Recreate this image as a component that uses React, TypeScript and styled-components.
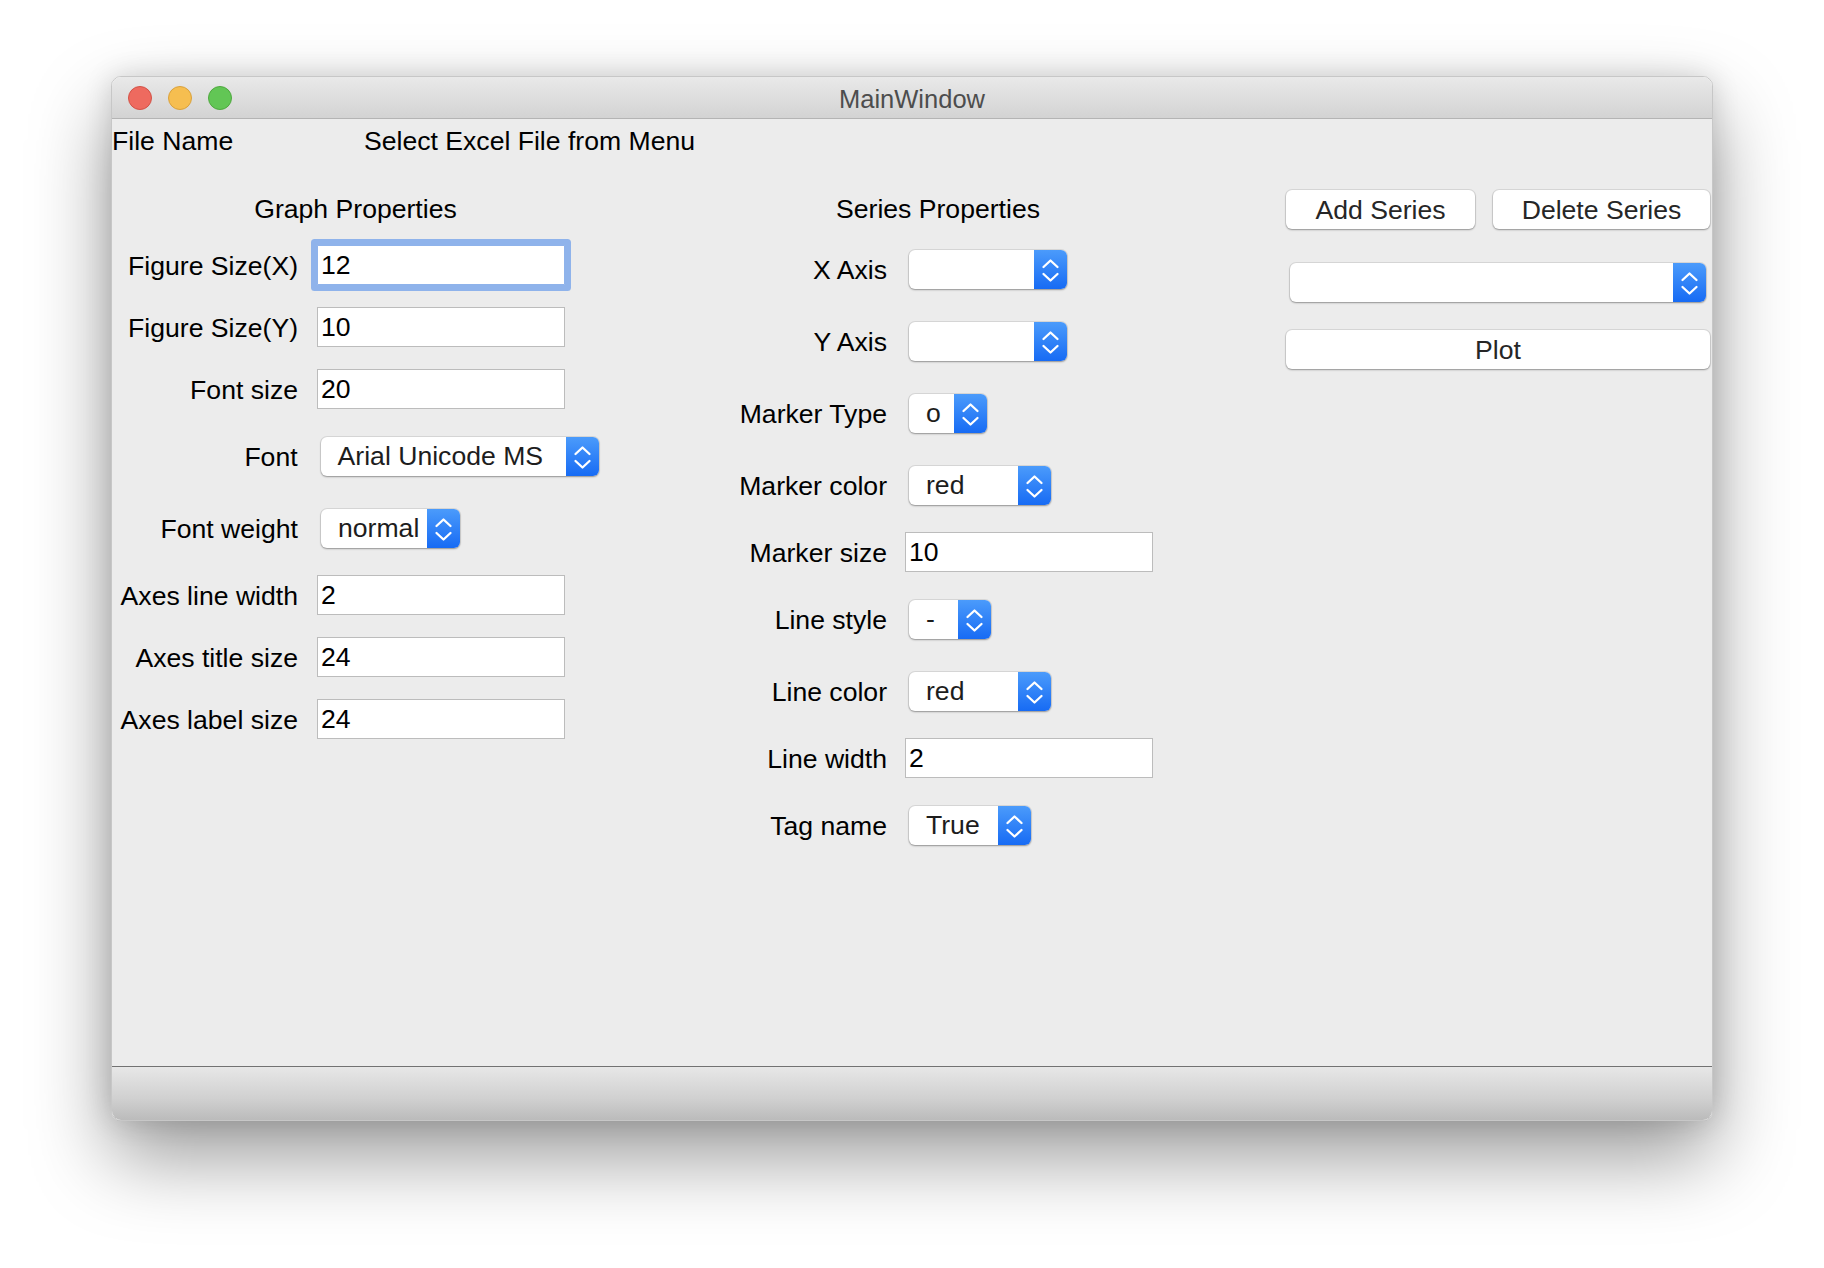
import React from "react";
import styled, { createGlobalStyle } from "styled-components";

const GlobalStyle = createGlobalStyle`
  html, body {
    margin: 0;
    padding: 0;
    background: #ffffff;
  }
  body {
    font-family: "Liberation Sans", Arial, Helvetica, sans-serif;
    -webkit-font-smoothing: antialiased;
  }
`;

const TEXT = "26.6px";

const Page = styled.div`
  width: 1824px;
  height: 1268px;
  box-sizing: border-box;
  padding: 76px 0 0 111px;
  background: #ffffff;
`;

const Window = styled.div`
  width: 1602px;
  height: 1045px;
  box-sizing: border-box;
  display: flex;
  flex-direction: column;
  border: 1px solid rgba(0, 0, 0, 0.22);
  border-radius: 10px;
  overflow: hidden;
  box-shadow: 0 36px 80px rgba(0, 0, 0, 0.4), 0 0 28px rgba(0, 0, 0, 0.14);
`;

const TitleBar = styled.div`
  height: 42px;
  box-sizing: border-box;
  display: grid;
  grid-template-columns: 1fr auto 1fr;
  align-items: center;
  padding: 0 16px;
  background: linear-gradient(#e9e9e9, #d3d3d3);
  border-bottom: 1px solid #b4b4b4;
`;

const Lights = styled.div`
  display: flex;
  gap: 16px;
`;

const Light = styled.span<{ $fill: string; $edge: string }>`
  width: 24px;
  height: 24px;
  box-sizing: border-box;
  border-radius: 50%;
  background: ${({ $fill }) => $fill};
  border: 1px solid ${({ $edge }) => $edge};
`;

const Title = styled.div`
  font-size: 25.5px;
  color: #4d4d4d;
  padding-top: 4px;
`;

const Content = styled.div`
  flex: 1;
  background: #ececec;
  display: flex;
  flex-direction: column;
`;

const Header = styled.div`
  height: 45px;
  display: flex;
  align-items: center;
  font-size: ${TEXT};
  color: #000;
`;

const HeaderCell = styled.span<{ $width: number }>`
  width: ${({ $width }) => $width}px;
  white-space: nowrap;
`;

const Columns = styled.div`
  display: flex;
  align-items: flex-start;
  margin-top: 24px;
`;

const Column = styled.div<{ $width: number; $offset?: number; $top?: number }>`
  width: ${({ $width }) => $width}px;
  margin-left: ${({ $offset = 0 }) => $offset}px;
  margin-top: ${({ $top = 0 }) => $top}px;
  display: flex;
  flex-direction: column;
`;

const GroupTitle = styled.div`
  height: 40px;
  display: flex;
  align-items: center;
  justify-content: center;
  padding-top: 2px;
  box-sizing: border-box;
  font-size: ${TEXT};
  color: #000;
`;

const Rows = styled.div<{ $lead: number }>`
  display: flex;
  flex-direction: column;
  padding-top: ${({ $lead }) => $lead}px;
`;

const Row = styled.div<{ $h: number }>`
  height: ${({ $h }) => $h}px;
  display: flex;
  align-items: center;
`;

const Label = styled.span<{ $width: number; $gap: number }>`
  width: ${({ $width }) => $width}px;
  margin-right: ${({ $gap }) => $gap}px;
  padding-top: 2px;
  text-align: right;
  white-space: nowrap;
  font-size: ${TEXT};
  color: #000;
`;

const Field = styled.div<{ $focused?: boolean }>`
  width: 248px;
  height: 40px;
  box-sizing: border-box;
  display: flex;
  align-items: center;
  padding: 1px 3px 0;
  background: #fff;
  font-size: ${TEXT};
  color: #000;
  border: 1px solid ${({ $focused }) => ($focused ? "#8fb3eb" : "#bcbcbc")};
  border-radius: ${({ $focused }) => ($focused ? "1px" : "0")};
  box-shadow: ${({ $focused }) => ($focused ? "0 0 0 6px #8fb3eb" : "none")};
`;

const ComboBox = styled.div<{ $width: number }>`
  width: ${({ $width }) => $width}px;
  height: 39px;
  margin-left: 4px;
  display: flex;
  background: #fff;
  border-radius: 6px;
  overflow: hidden;
  box-shadow: 0 0 0 1px rgba(0, 0, 0, 0.08), 0 1px 2px rgba(0, 0, 0, 0.32);
`;

const ComboValue = styled.span`
  flex: 1;
  display: flex;
  align-items: center;
  padding: 1px 0 0 17px;
  font-size: ${TEXT};
  color: #1d1d1d;
  white-space: nowrap;
  overflow: hidden;
`;

const ComboArrows = styled.span`
  width: 33px;
  flex: none;
  display: flex;
  align-items: center;
  justify-content: center;
  background: linear-gradient(#4b9bfb, #176bf4);
`;

const Combo: React.FC<{ value?: string; width: number }> = ({ value = "", width }) => (
  <ComboBox $width={width}>
    <ComboValue>{value}</ComboValue>
    <ComboArrows>
      <svg width="33" height="39" viewBox="0 0 33 39" fill="none">
        <path d="M9.5 17 L16.5 10.5 L23.5 17" stroke="#fff" strokeWidth="2.3" strokeLinecap="round" strokeLinejoin="round" />
        <path d="M9.5 24 L16.5 30.5 L23.5 24" stroke="#fff" strokeWidth="2.3" strokeLinecap="round" strokeLinejoin="round" />
      </svg>
    </ComboArrows>
  </ComboBox>
);

const ButtonRow = styled.div`
  display: flex;
  gap: 18px;
`;

const PushButton = styled.button<{ $width: number }>`
  width: ${({ $width }) => $width}px;
  height: 39px;
  padding: 2px 0 0;
  border: none;
  border-radius: 6px;
  background: #fff;
  font-family: inherit;
  font-size: ${TEXT};
  color: #262626;
  box-shadow: 0 0 0 1px rgba(0, 0, 0, 0.08), 0 1px 2px rgba(0, 0, 0, 0.32);
`;

const Stacked = styled.div<{ $top: number }>`
  margin-top: ${({ $top }) => $top}px;
  display: flex;
`;

const StatusBar = styled.div`
  height: 54px;
  box-sizing: border-box;
  border-top: 1px solid #727272;
  background: linear-gradient(#e7e7e7, #d0d0d0 60%, #bbbbbb);
`;

type FormItem = { label: string; kind: "input" | "combo"; value: string; width?: number; focused?: boolean };

const graphItems: FormItem[] = [
  { label: "Figure Size(X)", kind: "input", value: "12", focused: true },
  { label: "Figure Size(Y)", kind: "input", value: "10" },
  { label: "Font size", kind: "input", value: "20" },
  { label: "Font", kind: "combo", value: "Arial Unicode MS", width: 279 },
  { label: "Font weight", kind: "combo", value: "normal", width: 139 },
  { label: "Axes line width", kind: "input", value: "2" },
  { label: "Axes title size", kind: "input", value: "24" },
  { label: "Axes label size", kind: "input", value: "24" },
];

const seriesItems: FormItem[] = [
  { label: "X Axis", kind: "combo", value: "", width: 158 },
  { label: "Y Axis", kind: "combo", value: "", width: 158 },
  { label: "Marker Type", kind: "combo", value: "o", width: 78 },
  { label: "Marker color", kind: "combo", value: "red", width: 142 },
  { label: "Marker size", kind: "input", value: "10" },
  { label: "Line style", kind: "combo", value: "-", width: 82 },
  { label: "Line color", kind: "combo", value: "red", width: 142 },
  { label: "Line width", kind: "input", value: "2" },
  { label: "Tag name", kind: "combo", value: "True", width: 122 },
];

const FormRows: React.FC<{ items: FormItem[]; labelWidth: number; gap: number; lead: number }> = ({
  items,
  labelWidth,
  gap,
  lead,
}) => (
  <Rows $lead={lead}>
    {items.map((item) => (
      <Row key={item.label} $h={item.kind === "combo" ? 72 : 62}>
        <Label $width={labelWidth} $gap={gap}>
          {item.label}
        </Label>
        {item.kind === "input" ? (
          <Field $focused={item.focused}>{item.value}</Field>
        ) : (
          <Combo value={item.value} width={item.width ?? 150} />
        )}
      </Row>
    ))}
  </Rows>
);

export default function App() {
  return (
    <>
      <GlobalStyle />
      <Page>
        <Window>
          <TitleBar>
            <Lights>
              <Light $fill="#ee6a5f" $edge="#d25247" />
              <Light $fill="#f6be50" $edge="#d9a13d" />
              <Light $fill="#62c655" $edge="#4fa83f" />
            </Lights>
            <Title>MainWindow</Title>
            <span />
          </TitleBar>
          <Content>
            <Header>
              <HeaderCell $width={252}>File Name</HeaderCell>
              <HeaderCell $width={400}>Select Excel File from Menu</HeaderCell>
            </Header>
            <Columns>
              <Column $width={487}>
                <GroupTitle>Graph Properties</GroupTitle>
                <FormRows items={graphItems} labelWidth={186} gap={19} lead={6} />
              </Column>
              <Column $width={430} $offset={124}>
                <GroupTitle>Series Properties</GroupTitle>
                <FormRows items={seriesItems} labelWidth={164} gap={18} lead={5} />
              </Column>
              <Column $width={424} $offset={133} $top={2}>
                <ButtonRow>
                  <PushButton $width={189}>Add Series</PushButton>
                  <PushButton $width={217}>Delete Series</PushButton>
                </ButtonRow>
                <Stacked $top={34}>
                  <Combo width={416} />
                </Stacked>
                <Stacked $top={28}>
                  <PushButton $width={424}>Plot</PushButton>
                </Stacked>
              </Column>
            </Columns>
          </Content>
          <StatusBar />
        </Window>
      </Page>
    </>
  );
}
